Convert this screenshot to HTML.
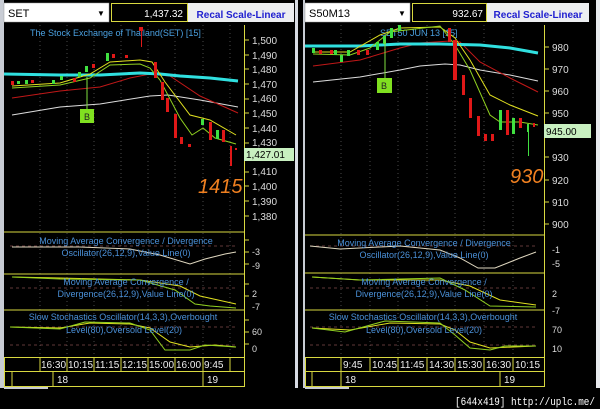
<!DOCTYPE html>
<html><head><meta charset="utf-8"><style>
html,body{margin:0;padding:0;background:#000;width:600px;height:409px;overflow:hidden}
svg{display:block}
text{font-family:"Liberation Sans",sans-serif}
text.mono{font-family:"Liberation Mono",monospace}
</style></head><body>
<svg width="600" height="409" viewBox="0 0 600 409" xmlns="http://www.w3.org/2000/svg">
<rect width="600" height="409" fill="#000"/>
<rect x="0" y="0" width="4" height="388" fill="#c8ccd4"/>
<rect x="295" y="0" width="4" height="388" fill="#d8dce4"/>
<rect x="298" y="0" width="5" height="388" fill="#000"/>
<rect x="303" y="0" width="2" height="388" fill="#c8ccd4"/>
<rect x="596" y="0" width="4" height="388" fill="#e8eaee"/>
<rect x="4" y="386" width="44" height="3" fill="#c8ccd4"/>
<rect x="305" y="386" width="44" height="3" fill="#c8ccd4"/>

<g id="L">
<rect x="4" y="3" width="105" height="19" fill="#fff" stroke="#999" stroke-width="0.5"/>
<text x="8" y="17" font-size="11" fill="#000">SET</text>
<text x="97" y="16" font-size="8" fill="#000">▼</text>
<rect x="111.5" y="3.5" width="76" height="18" fill="#000" stroke="#d8d840"/>
<text x="183" y="17" font-size="10" fill="#fff" text-anchor="end">1,437.32</text>
<rect x="188" y="3" width="106" height="19" fill="#eceef0"/>
<text x="241" y="18" font-size="10" font-weight="bold" fill="#2020d0" text-anchor="middle">Recal Scale-Linear</text>
<g stroke="#777" stroke-dasharray="1,3" stroke-width="0.6">
<line x1="40" y1="25" x2="40" y2="357"/><line x1="67" y1="25" x2="67" y2="357"/><line x1="94" y1="25" x2="94" y2="357"/><line x1="121" y1="25" x2="121" y2="357"/><line x1="148" y1="25" x2="148" y2="357"/><line x1="175" y1="25" x2="175" y2="357"/><line x1="203" y1="25" x2="203" y2="357"/><line x1="230" y1="25" x2="230" y2="357"/>
</g>
<line x1="244.5" y1="25" x2="244.5" y2="357" stroke="#d8d840"/>
<g fill="#ddd" font-size="10">
<text x="252" y="44">1,500</text><text x="252" y="59">1,490</text><text x="252" y="73">1,480</text><text x="252" y="88">1,470</text><text x="252" y="102">1,460</text><text x="252" y="117">1,450</text><text x="252" y="132">1,440</text><text x="252" y="146">1,430</text><text x="252" y="175">1,410</text><text x="252" y="190">1,400</text><text x="252" y="205">1,390</text><text x="252" y="220">1,380</text>
</g>
<g stroke="#d8d840"><line x1="245" y1="40" x2="249" y2="40"/><line x1="245" y1="55" x2="249" y2="55"/><line x1="245" y1="69" x2="249" y2="69"/><line x1="245" y1="84" x2="249" y2="84"/><line x1="245" y1="99" x2="249" y2="99"/><line x1="245" y1="113" x2="249" y2="113"/><line x1="245" y1="128" x2="249" y2="128"/><line x1="245" y1="143" x2="249" y2="143"/><line x1="245" y1="172" x2="249" y2="172"/><line x1="245" y1="186" x2="249" y2="186"/><line x1="245" y1="201" x2="249" y2="201"/><line x1="245" y1="216" x2="249" y2="216"/></g>
<rect x="244" y="148" width="50" height="13" fill="#c8f0c0"/>
<text x="246" y="158" font-size="10" fill="#000">1,427.01</text>
<text x="30" y="36" font-size="9" fill="#4aa0e0">The Stock Exchange of Thailand(SET) [15]</text>
<polyline fill="none" stroke="#ddd" stroke-width="1" points="12,115 60,107 100,104 150,96 168,95 200,100 238,107"/>
<polyline fill="none" stroke="#c01818" stroke-width="1" points="12,98 60,91 100,87 130,78 150,74 170,76 200,96 238,113"/>
<polyline fill="none" stroke="#30e0e0" stroke-width="3" points="4,74 60,75 100,75 140,73 160,74 180,76 210,78 238,81"/>
<polyline fill="none" stroke="#e0e020" stroke-width="1" points="12,86 60,83 90,74 110,62 140,60 152,62 165,82 190,115 210,120 236,135"/>
<polyline fill="none" stroke="#90d020" stroke-width="1" points="12,88 60,85 90,78 110,65 140,64 150,68 160,80 180,118 192,135 203,128 215,138 236,144"/>
<g fill="#e01818">
<rect x="11" y="81" width="3" height="4"/><rect x="31" y="80" width="3" height="3"/><rect x="73" y="78" width="3" height="4"/><rect x="92" y="64" width="3" height="4"/><rect x="112" y="54" width="3" height="4"/><rect x="125" y="55" width="3" height="3"/><rect x="139" y="27" width="4" height="4"/><rect x="141" y="30" width="1" height="17"/><rect x="154" y="62" width="3" height="16"/><rect x="161" y="82" width="3" height="18"/><rect x="166" y="98" width="3" height="14"/><rect x="174" y="114" width="3" height="24"/><rect x="180" y="137" width="3" height="7"/><rect x="188" y="144" width="3" height="3"/><rect x="209" y="122" width="3" height="18"/><rect x="222" y="130" width="3" height="12"/><rect x="230" y="146" width="2" height="20"/><rect x="235" y="148" width="2" height="2"/>
</g>
<g fill="#40e040">
<rect x="17" y="81" width="3" height="3"/><rect x="25" y="80" width="3" height="4"/><rect x="52" y="80" width="3" height="4"/><rect x="60" y="76" width="3" height="4"/><rect x="78" y="72" width="3" height="5"/><rect x="85" y="66" width="3" height="6"/><rect x="106" y="53" width="3" height="8"/><rect x="201" y="119" width="3" height="6"/><rect x="216" y="130" width="3" height="9"/>
</g>
<line x1="87" y1="77" x2="87" y2="110" stroke="#80e040"/>
<rect x="80" y="109" width="14" height="14" fill="#80e020"/>
<text x="87" y="120" font-size="9" fill="#222" text-anchor="middle">B</text>
<text x="198" y="193" font-size="20" font-style="italic" fill="#f08020">1415</text>
<line x1="4" y1="232" x2="244" y2="232" stroke="#d8d840"/>
<line x1="10" y1="246" x2="238" y2="246" stroke="#c07070" stroke-dasharray="3,3" stroke-width="0.6"/>
<polyline fill="none" stroke="#e0d8c0" points="12,247 80,247 130,249 160,255 190,264 205,259 225,254 236,252"/>
<text x="126" y="244" font-size="9" fill="#4a90d8" text-anchor="middle">Moving Average Convergence / Divergence</text>
<text x="126" y="256" font-size="9" fill="#4a90d8" text-anchor="middle">Oscillator(26,12,9),Value Line(0)</text>
<text x="252" y="255" font-size="9" fill="#ddd">-3</text><text x="252" y="269" font-size="9" fill="#ddd">-9</text>
<line x1="4" y1="274" x2="244" y2="274" stroke="#d8d840"/>
<line x1="10" y1="288" x2="238" y2="288" stroke="#c07070" stroke-dasharray="3,3" stroke-width="0.6"/>
<polyline fill="none" stroke="#e0e020" points="12,277 60,278 140,280 180,286 200,296 236,304"/>
<polyline fill="none" stroke="#90d020" points="12,277 60,279 140,280 175,290 195,304 210,306 236,308"/>
<text x="126" y="285" font-size="9" fill="#4a90d8" text-anchor="middle">Moving Average Convergence /</text>
<text x="126" y="297" font-size="9" fill="#4a90d8" text-anchor="middle">Divergence(26,12,9),Value Line(0)</text>
<text x="252" y="297" font-size="9" fill="#ddd">2</text><text x="252" y="310" font-size="9" fill="#ddd">-7</text>
<line x1="4" y1="310" x2="244" y2="310" stroke="#d8d840"/>
<line x1="10" y1="327" x2="238" y2="327" stroke="#c07070" stroke-dasharray="3,3" stroke-width="0.6"/>
<line x1="10" y1="345" x2="238" y2="345" stroke="#c07070" stroke-dasharray="3,3" stroke-width="0.6"/>
<polyline fill="none" stroke="#e0e020" points="10,327 60,328 90,323 130,324 150,328 170,342 190,347 215,345 236,347"/>
<polyline fill="none" stroke="#90d020" points="10,327 60,329 85,322 130,323 150,330 165,350 190,350 205,345 236,347"/>
<text x="123" y="320" font-size="9" fill="#4a90d8" text-anchor="middle">Slow Stochastics Oscillator(14,3,3),Overbought</text>
<text x="124" y="333" font-size="9" fill="#4a90d8" text-anchor="middle">Level(80),Oversold Level(20)</text>
<text x="252" y="335" font-size="9" fill="#ddd">60</text><text x="252" y="352" font-size="9" fill="#ddd">0</text>
<g stroke="#d8d840"><line x1="245" y1="240" x2="249" y2="240"/><line x1="245" y1="252" x2="249" y2="252"/><line x1="245" y1="264" x2="249" y2="264"/><line x1="245" y1="284" x2="249" y2="284"/><line x1="245" y1="296" x2="249" y2="296"/><line x1="245" y1="320" x2="249" y2="320"/><line x1="245" y1="332" x2="249" y2="332"/><line x1="245" y1="344" x2="249" y2="344"/></g>
<rect x="4.5" y="357.5" width="240" height="29" fill="none" stroke="#d8d840"/>
<line x1="4" y1="371.5" x2="244" y2="371.5" stroke="#d8d840"/>
<g stroke="#d8d840"><line x1="40" y1="357" x2="40" y2="371"/><line x1="67" y1="357" x2="67" y2="371"/><line x1="94" y1="357" x2="94" y2="371"/><line x1="121" y1="357" x2="121" y2="371"/><line x1="148" y1="357" x2="148" y2="371"/><line x1="175" y1="357" x2="175" y2="371"/><line x1="203" y1="357" x2="203" y2="371"/><line x1="230" y1="357" x2="230" y2="371"/><line x1="12" y1="371" x2="12" y2="387"/><line x1="53" y1="371" x2="53" y2="387"/><line x1="203" y1="371" x2="203" y2="387"/></g>
<g fill="#eee" font-size="10"><text x="41" y="368">16:30</text><text x="68" y="368">10:15</text><text x="95" y="368">11:15</text><text x="122" y="368">12:15</text><text x="149" y="368">15:00</text><text x="176" y="368">16:00</text><text x="204" y="368">9:45</text><text x="57" y="383">18</text><text x="207" y="383">19</text></g>
</g>

<g id="R">
<rect x="305" y="3" width="105" height="19" fill="#fff" stroke="#999" stroke-width="0.5"/>
<text x="309" y="17" font-size="11" fill="#000">S50M13</text>
<text x="398" y="16" font-size="8" fill="#000">▼</text>
<rect x="412.5" y="3.5" width="74" height="18" fill="#000" stroke="#d8d840"/>
<text x="483" y="17" font-size="10" fill="#fff" text-anchor="end">932.67</text>
<rect x="487" y="3" width="102" height="19" fill="#eceef0"/>
<text x="538" y="18" font-size="10" font-weight="bold" fill="#2020d0" text-anchor="middle">Recal Scale-Linear</text>
<g stroke="#777" stroke-dasharray="1,3" stroke-width="0.6">
<line x1="341" y1="25" x2="341" y2="357"/><line x1="370" y1="25" x2="370" y2="357"/><line x1="398" y1="25" x2="398" y2="357"/><line x1="427" y1="25" x2="427" y2="357"/><line x1="455" y1="25" x2="455" y2="357"/><line x1="484" y1="25" x2="484" y2="357"/><line x1="513" y1="25" x2="513" y2="357"/>
</g>
<line x1="544.5" y1="25" x2="544.5" y2="357" stroke="#d8d840"/>
<g fill="#ddd" font-size="10">
<text x="552" y="51">980</text><text x="552" y="73">970</text><text x="552" y="95">960</text><text x="552" y="117">950</text><text x="552" y="161">930</text><text x="552" y="184">920</text><text x="552" y="206">910</text><text x="552" y="228">900</text>
</g>
<g stroke="#d8d840"><line x1="545" y1="47" x2="549" y2="47"/><line x1="545" y1="69" x2="549" y2="69"/><line x1="545" y1="91" x2="549" y2="91"/><line x1="545" y1="113" x2="549" y2="113"/><line x1="545" y1="157" x2="549" y2="157"/><line x1="545" y1="180" x2="549" y2="180"/><line x1="545" y1="202" x2="549" y2="202"/><line x1="545" y1="224" x2="549" y2="224"/></g>
<rect x="544" y="124" width="47" height="14" fill="#c8f0c0"/>
<text x="546" y="135" font-size="10" fill="#000">945.00</text>
<text x="380" y="36" font-size="9" fill="#4aa0e0">SET50 JUN 13  [15]</text>
<polyline fill="none" stroke="#ddd" points="313,82 360,77 400,70 420,66 445,64 460,65 480,70 510,75 538,81"/>
<polyline fill="none" stroke="#c01818" points="313,66 360,60 400,48 420,43 450,41 460,42 480,62 510,78 538,92"/>
<polyline fill="none" stroke="#30e0e0" stroke-width="3" points="305,46 360,46 400,44 440,44 480,45 510,48 538,53"/>
<polyline fill="none" stroke="#e0e020" points="313,52 350,52 380,35 400,28 440,27 455,38 470,60 490,95 510,105 538,116"/>
<polyline fill="none" stroke="#90d020" points="313,54 350,55 370,48 390,32 440,26 455,45 470,70 490,115 500,122 520,122 538,125"/>
<g fill="#e01818">
<rect x="319" y="50" width="3" height="4"/><rect x="330" y="50" width="3" height="4"/><rect x="357" y="50" width="3" height="5"/><rect x="366" y="50" width="3" height="5"/><rect x="448" y="28" width="3" height="14"/><rect x="453" y="40" width="4" height="40"/><rect x="462" y="75" width="3" height="20"/><rect x="469" y="98" width="3" height="20"/><rect x="477" y="116" width="3" height="20"/><rect x="484" y="134" width="3" height="7"/><rect x="491" y="134" width="3" height="7"/><rect x="506" y="110" width="3" height="25"/><rect x="519" y="118" width="3" height="10"/><rect x="533" y="123" width="2" height="4"/>
</g>
<g fill="#40e040">
<rect x="312" y="48" width="3" height="5"/><rect x="334" y="50" width="3" height="5"/><rect x="340" y="55" width="3" height="7"/><rect x="347" y="50" width="3" height="6"/><rect x="376" y="42" width="3" height="8"/><rect x="383" y="36" width="3" height="8"/><rect x="390" y="28" width="3" height="10"/><rect x="398" y="25" width="3" height="6"/><rect x="499" y="110" width="3" height="20"/><rect x="512" y="118" width="3" height="16"/><rect x="527" y="124" width="2" height="8"/><rect x="528" y="124" width="1" height="32"/>
</g>
<line x1="385" y1="40" x2="385" y2="80" stroke="#80e040"/>
<rect x="377" y="78" width="15" height="15" fill="#80e020"/>
<text x="384" y="89" font-size="9" fill="#222" text-anchor="middle">B</text>
<text x="510" y="183" font-size="20" font-style="italic" fill="#f08020">930</text>
<line x1="305" y1="235" x2="544" y2="235" stroke="#d8d840"/>
<line x1="310" y1="246" x2="538" y2="246" stroke="#c07070" stroke-dasharray="3,3" stroke-width="0.6"/>
<polyline fill="none" stroke="#e0d8c0" points="310,246 340,249 400,246 440,250 460,258 478,268 495,268 520,258 536,252"/>
<text x="424" y="246" font-size="9" fill="#4a90d8" text-anchor="middle">Moving Average Convergence / Divergence</text>
<text x="424" y="258" font-size="9" fill="#4a90d8" text-anchor="middle">Oscillator(26,12,9),Value Line(0)</text>
<text x="552" y="253" font-size="9" fill="#ddd">-1</text><text x="552" y="267" font-size="9" fill="#ddd">-5</text>
<line x1="305" y1="273" x2="544" y2="273" stroke="#d8d840"/>
<line x1="310" y1="288" x2="538" y2="288" stroke="#c07070" stroke-dasharray="3,3" stroke-width="0.6"/>
<polyline fill="none" stroke="#e0e020" points="312,277 360,280 440,280 470,286 500,300 536,305"/>
<polyline fill="none" stroke="#90d020" points="312,277 360,280 440,278 465,290 490,306 536,307"/>
<text x="424" y="285" font-size="9" fill="#4a90d8" text-anchor="middle">Moving Average Convergence /</text>
<text x="424" y="297" font-size="9" fill="#4a90d8" text-anchor="middle">Divergence(26,12,9),Value Line(0)</text>
<text x="552" y="297" font-size="9" fill="#ddd">2</text><text x="552" y="314" font-size="9" fill="#ddd">-7</text>
<line x1="305" y1="310" x2="544" y2="310" stroke="#d8d840"/>
<line x1="310" y1="327" x2="538" y2="327" stroke="#c07070" stroke-dasharray="3,3" stroke-width="0.6"/>
<line x1="310" y1="345" x2="538" y2="345" stroke="#c07070" stroke-dasharray="3,3" stroke-width="0.6"/>
<polyline fill="none" stroke="#e0e020" points="312,328 350,330 390,323 440,324 455,330 470,342 490,348 536,346"/>
<polyline fill="none" stroke="#90d020" points="312,328 345,332 385,321 440,323 455,335 470,348 490,350 505,346 536,346"/>
<text x="423" y="320" font-size="9" fill="#4a90d8" text-anchor="middle">Slow Stochastics Oscillator(14,3,3),Overbought</text>
<text x="424" y="333" font-size="9" fill="#4a90d8" text-anchor="middle">Level(80),Oversold Level(20)</text>
<text x="552" y="333" font-size="9" fill="#ddd">70</text><text x="552" y="352" font-size="9" fill="#ddd">10</text>
<rect x="305.5" y="357.5" width="239" height="29" fill="none" stroke="#d8d840"/>
<line x1="305" y1="371.5" x2="544" y2="371.5" stroke="#d8d840"/>
<g stroke="#d8d840"><line x1="341" y1="357" x2="341" y2="387"/><line x1="370" y1="357" x2="370" y2="371"/><line x1="398" y1="357" x2="398" y2="371"/><line x1="427" y1="357" x2="427" y2="371"/><line x1="455" y1="357" x2="455" y2="371"/><line x1="484" y1="357" x2="484" y2="371"/><line x1="513" y1="357" x2="513" y2="371"/><line x1="312" y1="371" x2="312" y2="387"/><line x1="500" y1="371" x2="500" y2="387"/></g>
<g fill="#eee" font-size="10"><text x="343" y="368">9:45</text><text x="372" y="368">10:45</text><text x="400" y="368">11:45</text><text x="429" y="368">14:30</text><text x="457" y="368">15:30</text><text x="486" y="368">16:30</text><text x="515" y="368">10:15</text><text x="345" y="383">18</text><text x="504" y="383">19</text></g>
</g>
<text class="mono" x="595" y="405" font-size="11" fill="#fff" text-anchor="end" textLength="140" lengthAdjust="spacingAndGlyphs">[644x419] http://uplc.me/</text>
</svg>
</body></html>
